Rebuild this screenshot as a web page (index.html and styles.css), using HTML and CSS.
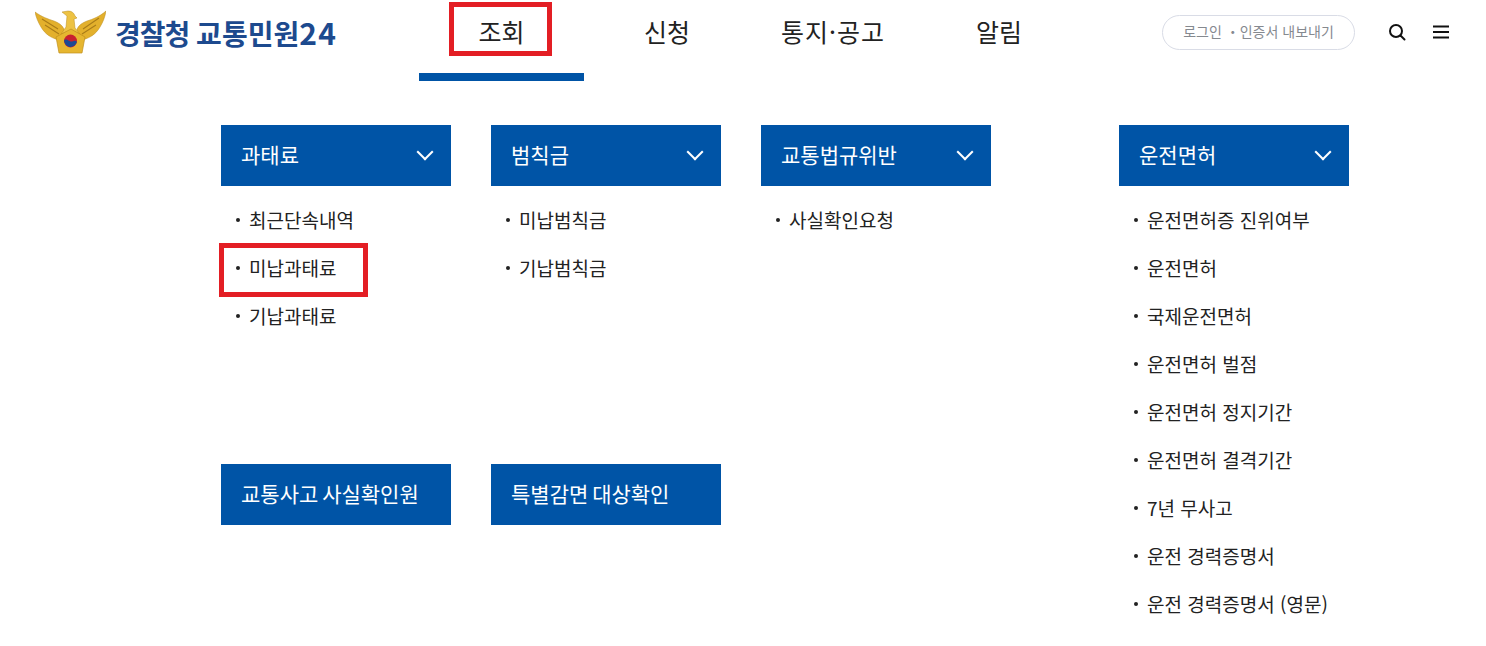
FILE: index.html
```html
<!DOCTYPE html>
<html lang="ko">
<head>
  <meta charset="UTF-8">
  <title>경찰청 교통민원24</title>
  <link rel="stylesheet" href="styles.css">
</head>
<body>

  <header class="top">
    <a class="logo" href="#">
      <svg class="emblem" width="71" height="44" viewBox="0 0 71 44">
        <!-- wings -->
        <path d="M0 2 C7 7 13 9 19 11 C24 13 27 15 29 19 L28 27 L24 30 C16 28 10 24 6 17 C3 12 1 7 0 2 Z" fill="#e3b02c" stroke="#b98a1e" stroke-width="0.5"/>
        <path d="M71 1 C64 7 58 9 52 11 C47 13 44 15 42 19 L43 27 L47 30 C55 28 61 24 65 17 C68 12 70 7 71 1 Z" fill="#e3b02c" stroke="#b98a1e" stroke-width="0.5"/>
        <path d="M7 9 L23 19 M10 15 L24 24 M64 8 L48 19 M61 15 L47 24" stroke="#a97c18" stroke-width="1.1" fill="none"/>
        <!-- head and body -->
        <path d="M27 2 L33 1 C37 1 39 3 40 6 L42 8 L39 9 L40 18 L45 24 L36 20 L26 24 L31 17 L32 6 Z" fill="#edc243" stroke="#b98a1e" stroke-width="0.5"/>
        <!-- shield -->
        <path d="M36 19 L50 27 L47 43 L24 43 L21 27 Z" fill="#e6b630" stroke="#c08f1d" stroke-width="0.7"/>
        <circle cx="35.500" cy="31" r="6.500" fill="#c8202f"/>
        <path d="M29.100 30 A6.500 6.500 0 0 0 41.900 32 C39.500 29 37.500 33 34.500 31 C32.500 29.500 30.500 29 29.100 30 Z" fill="#1c4a94"/>
      </svg>
      <span class="logo-text"><span class="logo-org">경찰청</span> 교통민원<span class="logo-num">24</span></span>
    </a>

    <nav class="gnb">
      <a class="gnb-item active" href="#">조회<span class="mark mark-gnb"></span></a>
      <a class="gnb-item" href="#">신청</a>
      <a class="gnb-item wide" href="#">통지·공고</a>
      <a class="gnb-item" href="#">알림</a>
    </nav>

    <div class="utils">
      <a class="login" href="#">로그인 ・인증서 내보내기</a>
      <a class="icon-btn" href="#" aria-label="검색">
        <svg width="18" height="18" viewBox="0 0 18 18" fill="none" stroke="#111" stroke-width="2">
          <circle cx="8" cy="8" r="6"/>
          <path d="M12.500 12.500 L16.500 16.500" stroke-linecap="round"/>
        </svg>
      </a>
      <a class="icon-btn" href="#" aria-label="메뉴">
        <svg width="16" height="14" viewBox="0 0 16 14" fill="none" stroke="#111" stroke-width="2">
          <path d="M0 1.500 H16 M0 7 H16 M0 12.500 H16"/>
        </svg>
      </a>
    </div>
  </header>

  <main class="menu">
    <div class="groups">
      <section class="group">
        <h2 class="group-title">과태료<span class="chevron"></span></h2>
        <ul class="links">
          <li>최근단속내역</li>
          <li>미납과태료<span class="mark mark-link"></span></li>
          <li>기납과태료</li>
        </ul>
      </section>
      <section class="group">
        <h2 class="group-title">범칙금<span class="chevron"></span></h2>
        <ul class="links">
          <li>미납범칙금</li>
          <li>기납범칙금</li>
        </ul>
      </section>
      <section class="group">
        <h2 class="group-title">교통법규위반<span class="chevron"></span></h2>
        <ul class="links">
          <li>사실확인요청</li>
        </ul>
      </section>
      <section class="group">
        <h2 class="group-title">교통사고 사실확인원</h2>
      </section>
      <section class="group">
        <h2 class="group-title">특별감면 대상확인</h2>
      </section>
    </div>

    <section class="group group-side">
      <h2 class="group-title">운전면허<span class="chevron"></span></h2>
      <ul class="links">
        <li>운전면허증 진위여부</li>
        <li>운전면허</li>
        <li>국제운전면허</li>
        <li>운전면허 벌점</li>
        <li>운전면허 정지기간</li>
        <li>운전면허 결격기간</li>
        <li>7년 무사고</li>
        <li>운전 경력증명서</li>
        <li>운전 경력증명서 (영문)</li>
      </ul>
    </section>
  </main>

</body>
</html>
```

FILE: styles.css
```css
* {
  margin: 0;
  padding: 0;
  box-sizing: border-box;
}

body {
  font-family: 'Noto Sans CJK KR', 'Noto Sans', sans-serif;
  background: #fff;
  color: #222;
  overflow: hidden;
}

a {
  color: inherit;
  text-decoration: none;
}

ul {
  list-style: none;
}

.top {
  display: flex;
  height: 81px;
}

.logo {
  width: 419px;
  height: 60px;
  padding: 10px 0 0 35px;
  display: flex;
  align-items: flex-start;
  gap: 9px;
}

.logo-text {
  font-size: 28px;
  line-height: 44px;
  font-weight: 700;
  color: #1d4a8e;
  white-space: nowrap;
  word-spacing: -1px;
}

.logo-org {
  letter-spacing: -1px;
}

.logo-num {
  font-size: 30px;
  letter-spacing: 1.500px;
}

.gnb {
  display: flex;
}

.gnb-item {
  position: relative;
  width: 166px;
  height: 81px;
  padding-top: 13px;
  text-align: center;
  font-size: 25px;
  line-height: 36px;
  color: #222;
}

.gnb-item.active {
  width: 165px;
  border-bottom: 8px solid #0054a6;
}

.gnb-item.wide {
  letter-spacing: 1px;
}

.mark {
  position: absolute;
  border: 5px solid #e31e24;
}

.mark-gnb {
  left: 30px;
  top: 2px;
  width: 103px;
  height: 54px;
}

.utils {
  margin-left: 80px;
  height: 64px;
  display: flex;
  align-items: center;
}

.login {
  width: 193px;
  height: 35px;
  border: 1px solid #d9dce6;
  border-radius: 18px;
  font-size: 14px;
  line-height: 31px;
  text-align: center;
  color: #85898f;
  white-space: nowrap;
}

.icon-btn {
  display: flex;
  justify-content: center;
  width: 18px;
  margin-left: 33px;
}

.icon-btn + .icon-btn {
  margin-left: 26px;
}

.menu {
  display: flex;
  padding: 44px 0 0 221px;
}

.groups {
  width: 770px;
  display: grid;
  grid-template-columns: repeat(3, 230px);
  grid-template-rows: 339px auto;
  column-gap: 40px;
}

.group-side {
  width: 230px;
  margin-left: 128px;
}

.group-title {
  display: flex;
  justify-content: space-between;
  align-items: center;
  height: 61px;
  padding: 0 20px 4px;
  background: #0054a6;
  color: #fff;
  font-size: 21px;
  font-weight: 400;
  word-spacing: -2px;
  white-space: nowrap;
}

.chevron {
  width: 12px;
  height: 12px;
  margin: -4px 0 0 0;
  border-right: 2px solid #fff;
  border-bottom: 2px solid #fff;
  transform: rotate(45deg);
}

.links {
  padding-top: 10px;
}

.links li {
  position: relative;
  height: 48px;
  padding-left: 28px;
  font-size: 19px;
  line-height: 48px;
  color: #222;
  white-space: nowrap;
}

.links li::before {
  content: '';
  position: absolute;
  left: 15px;
  top: 22px;
  width: 4px;
  height: 4px;
  border-radius: 50%;
  background: #222;
}

.mark-link {
  left: -2px;
  top: -1px;
  width: 149px;
  height: 54px;
}
```
